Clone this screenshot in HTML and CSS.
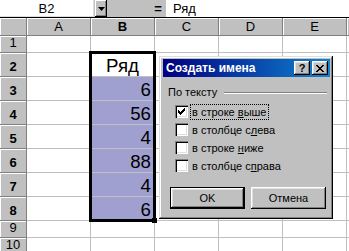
FILE: index.html
```html
<!DOCTYPE html>
<html lang="ru">
<head>
    <meta charset="UTF-8">
    <meta name="viewport" content="width=device-width, initial-scale=1.0">
    <title>Создать имена</title>
    <link rel="stylesheet" href="styles.css">
</head>
<body>
    <div class="formula-bar">
        <div class="name-box">B2</div>
        <div class="drop-btn">
            <svg width="7" height="4" viewBox="0 0 7 4"><path d="M0 0h7L3.5 4z" fill="#000"/></svg>
        </div>
        <div class="equals">=</div>
        <div class="formula-input">Ряд</div>
    </div>

    <div class="sheet">
        <div class="hd"></div>
        <div class="hd">A</div>
        <div class="hd bold">B</div>
        <div class="hd">C</div>
        <div class="hd">D</div>
        <div class="hd">E</div>
        <div class="hd"></div>

        <div class="rh">1</div>
        <div class="cell"></div><div class="cell"></div><div class="cell"></div><div class="cell"></div><div class="cell"></div><div class="cell"></div>

        <div class="rh bold">2</div>
        <div class="cell"></div><div class="cell big center">Ряд</div><div class="cell"></div><div class="cell"></div><div class="cell"></div><div class="cell"></div>

        <div class="rh bold">3</div>
        <div class="cell"></div><div class="cell big num picked">6</div><div class="cell"></div><div class="cell"></div><div class="cell"></div><div class="cell"></div>

        <div class="rh bold">4</div>
        <div class="cell"></div><div class="cell big num picked">56</div><div class="cell"></div><div class="cell"></div><div class="cell"></div><div class="cell"></div>

        <div class="rh bold">5</div>
        <div class="cell"></div><div class="cell big num picked">4</div><div class="cell"></div><div class="cell"></div><div class="cell"></div><div class="cell"></div>

        <div class="rh bold">6</div>
        <div class="cell"></div><div class="cell big num picked">88</div><div class="cell"></div><div class="cell"></div><div class="cell"></div><div class="cell"></div>

        <div class="rh bold">7</div>
        <div class="cell"></div><div class="cell big num picked">4</div><div class="cell"></div><div class="cell"></div><div class="cell"></div><div class="cell"></div>

        <div class="rh bold">8</div>
        <div class="cell"></div><div class="cell big num picked">6</div><div class="cell"></div><div class="cell"></div><div class="cell"></div><div class="cell"></div>

        <div class="rh">9</div>
        <div class="cell"></div><div class="cell"></div><div class="cell"></div><div class="cell"></div><div class="cell"></div><div class="cell"></div>

        <div class="rh">10</div>
        <div class="cell"></div><div class="cell"></div><div class="cell"></div><div class="cell"></div><div class="cell"></div><div class="cell"></div>

        <!-- selection frame over B2:B8 -->
        <div class="selection"></div>
        <div class="fill-handle"></div>
    </div>

    <div class="dialog">
        <div class="title-bar">
            <span class="title">Создать имена</span>
            <div class="title-btns">
                <span class="tbtn">?</span>
                <span class="tbtn">
                    <svg width="8" height="7" viewBox="0 0 8 7" shape-rendering="crispEdges"><path d="M0 0h2v1h-2zM6 0h2v1h-2zM1 1h2v1h-2zM5 1h2v1h-2zM2 2h4v1h-4zM3 3h2v1h-2zM2 4h4v1h-4zM1 5h2v1h-2zM5 5h2v1h-2zM0 6h2v1h-2zM6 6h2v1h-2z" fill="#000"/></svg>
                </span>
            </div>
        </div>

        <div class="group-head">
            <span>По тексту</span>
            <span class="group-line"></span>
        </div>

        <label class="cb-row">
            <span class="cb">
                <svg width="13" height="13" viewBox="0 0 13 13" shape-rendering="crispEdges"><path d="M9 3h1v1h-1zM8 4h2v1h-2zM3 5h1v1h-1zM7 5h3v1h-3zM3 6h2v1h-2zM6 6h3v1h-3zM3 7h5v1h-5zM4 8h3v1h-3zM5 9h1v1h-1z" fill="#000"/></svg>
            </span>
            <span class="cb-label focus">в строке <u>в</u>ыше</span>
        </label>
        <label class="cb-row">
            <span class="cb"></span>
            <span class="cb-label">в столбце с<u>л</u>ева</span>
        </label>
        <label class="cb-row">
            <span class="cb"></span>
            <span class="cb-label">в строке <u>н</u>иже</span>
        </label>
        <label class="cb-row">
            <span class="cb"></span>
            <span class="cb-label">в столбце с<u>п</u>рава</span>
        </label>

        <div class="buttons">
            <button class="btn default">OK</button>
            <button class="btn">Отмена</button>
        </div>
    </div>
</body>
</html>
```

FILE: styles.css
```css
/* General styles */
body {
    margin: 0;
    width: 349px;
    height: 251px;
    overflow: hidden;
    position: relative;
    background-color: #fff;
    color: #000;
    font-family: "Liberation Sans", Arial, sans-serif;
}

/* Formula bar */
.formula-bar {
    display: flex;
    height: 18px;
    box-sizing: border-box;
    background-color: #c0c0c0;
    border-bottom: 1px solid #000;
}

.name-box {
    width: 94px;
    height: 17px;
    box-sizing: border-box;
    padding-top: 1px;
    background-color: #fff;
    border-right: 1px solid #dfdfdf;
    border-bottom: 1px solid #dfdfdf;
    font-size: 13px;
    line-height: 15px;
    text-align: center;
}

.drop-btn {
    width: 12px;
    height: 17px;
    margin-left: 1px;
    display: flex;
    align-items: center;
    justify-content: center;
    background-color: #c0c0c0;
    box-shadow: inset -1px -1px #000, inset 1px 1px #fff, inset -2px -2px #808080;
}

.drop-btn svg {
    display: block;
}

.equals {
    width: 10px;
    margin-left: 46px;
    font-size: 13px;
    font-weight: bold;
    line-height: 17px;
    text-align: center;
}

.formula-input {
    flex: 1;
    height: 17px;
    box-sizing: border-box;
    margin-left: 3px;
    padding: 1px 0 0 7px;
    background-color: #fff;
    font-size: 13px;
    line-height: 15px;
}

/* Worksheet grid */
.sheet {
    position: relative;
    display: grid;
    grid-template-columns: 27px repeat(6, 64px);
    grid-template-rows: 18px 17px repeat(7, 24px) 17px 17px;
    font-size: 13px;
}

.hd,
.rh {
    display: flex;
    justify-content: center;
    box-sizing: border-box;
    background-color: #c0c0c0;
    border-right: 1px solid #808080;
    border-bottom: 1px solid #808080;
    box-shadow: inset 1px 1px #fff;
    line-height: 1;
}

.hd {
    align-items: center;
}

.rh {
    align-items: flex-end;
    padding-bottom: 3px;
}

.bold {
    font-weight: bold;
}

.cell {
    display: flex;
    align-items: flex-end;
    box-sizing: border-box;
    border-right: 1px solid #c0c0c0;
    border-bottom: 1px solid #c0c0c0;
    overflow: hidden;
    line-height: 1;
}

.big {
    font-size: 18.67px;
}

.center {
    justify-content: center;
}

.num {
    justify-content: flex-end;
    padding-right: 3px;
}

.picked {
    background-color: #a0a0d0;
}

.selection {
    position: absolute;
    left: 89px;
    top: 33px;
    width: 67px;
    height: 171px;
    box-sizing: border-box;
    border: 3px solid #000;
}

.fill-handle {
    position: absolute;
    left: 152px;
    top: 200px;
    width: 5px;
    height: 5px;
    background-color: #000;
}

/* Dialog */
.dialog {
    position: absolute;
    left: 159px;
    top: 56px;
    width: 174px;
    height: 163px;
    box-sizing: border-box;
    padding: 3px 3px 3px 4px;
    display: flex;
    flex-direction: column;
    background-color: #c0c0c0;
    box-shadow: inset -1px -1px #000, inset 1px 1px #dfdfdf, inset -2px -2px #808080, inset 2px 2px #fff;
    font-size: 11px;
}

.title-bar {
    height: 18px;
    display: flex;
    align-items: center;
    justify-content: space-between;
    padding: 0 2px 0 3px;
    background: linear-gradient(to right, #000080, #1084d0);
    color: #fff;
}

.title {
    font-size: 12px;
    font-weight: bold;
}

.title-btns {
    display: flex;
    gap: 2px;
}

.tbtn {
    width: 16px;
    height: 14px;
    display: flex;
    align-items: center;
    justify-content: center;
    background-color: #c0c0c0;
    box-shadow: inset -1px -1px #000, inset 1px 1px #fff, inset -2px -2px #808080, inset 2px 2px #dfdfdf;
    color: #000;
    font-size: 11px;
    font-weight: bold;
}

.group-head {
    display: flex;
    align-items: center;
    margin-top: 9px;
    padding-left: 5px;
    line-height: 13px;
}

.group-line {
    flex: 1;
    margin: 0 3px 0 7px;
    border-top: 1px solid #808080;
    border-bottom: 1px solid #fff;
}

.cb-row {
    display: flex;
    align-items: center;
    height: 13px;
    margin-top: 5px;
    padding-left: 12px;
    line-height: 14px;
}

.group-head + .cb-row {
    margin-top: 6px;
}

.cb {
    width: 13px;
    height: 13px;
    flex: none;
    margin-right: 2px;
    background-color: #fff;
    box-shadow: inset 1px 1px #808080, inset 2px 2px #000, inset -1px -1px #fff, inset -2px -2px #dfdfdf;
}

.cb svg {
    display: block;
}

.cb-label {
    padding: 1px 2px;
}

.focus {
    outline: 1px dotted #000;
    outline-offset: -1px;
}

.buttons {
    display: flex;
    gap: 6px;
    margin-top: 15px;
    padding-left: 7px;
}

.btn {
    width: 75px;
    height: 22px;
    padding: 0;
    border: none;
    background-color: #c0c0c0;
    box-shadow: inset -1px -1px #000, inset 1px 1px #fff, inset -2px -2px #808080, inset 2px 2px #dfdfdf;
    font-family: "Liberation Sans", Arial, sans-serif;
    font-size: 11px;
    color: #000;
}

.btn.default {
    border: 1px solid #000;
}
```
